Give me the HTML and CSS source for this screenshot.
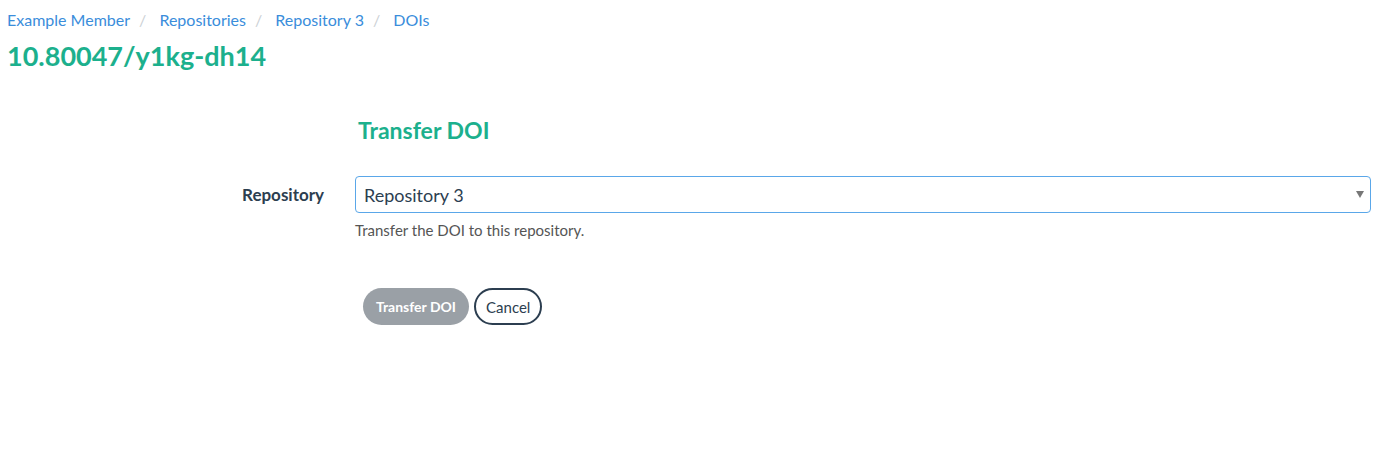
FILE: index.html
```html
<!DOCTYPE html>
<html lang="en">
<head>
<meta charset="utf-8">
<title>Transfer DOI</title>
<link rel="stylesheet" href="styles.css">
</head>
<body>
<div class="page">
  <nav class="breadcrumb">
    <a href="#">Example Member</a><span class="sep">/</span>
    <a href="#">Repositories</a><span class="sep">/</span>
    <a href="#">Repository 3</a><span class="sep">/</span>
    <a href="#">DOIs</a>
  </nav>
  <h1 class="doi-title">10.80047/y1kg-dh14</h1>

  <form class="form">
    <div class="row">
      <div class="label-col"></div>
      <div class="field-col"><h2 class="form-title">Transfer DOI</h2></div>
    </div>
    <div class="row field-row">
      <div class="label-col"><label class="label">Repository</label></div>
      <div class="field-col">
        <div class="select">
          <span class="select-value">Repository 3</span>
          <span class="caret"></span>
        </div>
        <p class="help">Transfer the DOI to this repository.</p>
      </div>
    </div>
    <div class="row">
      <div class="label-col"></div>
      <div class="field-col buttons">
        <button type="button" class="btn btn-primary">Transfer DOI</button>
        <button type="button" class="btn btn-outline">Cancel</button>
      </div>
    </div>
  </form>
</div>
</body>
</html>
```
FILE: styles.css
```css
html, body {
  margin: 0;
  padding: 0;
  background: #fff;
}
body {
  font-family: "Lato", "Liberation Sans", sans-serif;
  color: #2c3e50;
}
.page {
  padding: 8px 17px 0 7px;
}
.breadcrumb {
  font-size: 16px;
  line-height: 24px;
  color: #b4bcc2;
}
.breadcrumb a {
  color: #3a8ddb;
  text-decoration: none;
}
.breadcrumb .sep {
  padding: 0 9px;
  color: #ccd1d5;
}
.doi-title {
  margin: 8px 0 0 0;
  font-size: 27px;
  line-height: 32px;
  font-weight: 700;
  color: #1cb08d;
}
.form {
  margin-top: 42px;
}
.row {
  display: flex;
}
.label-col {
  width: 348px;
  flex: none;
  padding-right: 31px;
  box-sizing: border-box;
  text-align: right;
}
.field-col {
  flex: 1;
}
.form-title {
  margin: 0 0 0 3px;
  font-size: 23px;
  line-height: 32px;
  font-weight: 700;
  color: #1cb08d;
}
.field-row {
  margin-top: 30px;
}
.label {
  display: block;
  font-size: 17px;
  font-weight: 700;
  line-height: 38px;
  color: #2c3e50;
}
.select {
  display: flex;
  align-items: center;
  justify-content: space-between;
  height: 37px;
  box-sizing: border-box;
  border: 1px solid #5aa7e9;
  border-radius: 4px;
  padding: 0 6px 0 8px;
}
.select-value {
  font-size: 18px;
  color: #2c3e50;
}
.caret {
  width: 0;
  height: 0;
  border-left: 4px solid transparent;
  border-right: 4px solid transparent;
  border-top: 7px solid #777;
}
.help {
  margin: 7px 0 0 0;
  font-size: 15px;
  line-height: 20px;
  color: #555;
}
.buttons {
  display: flex;
  gap: 5px;
  margin-top: 48px;
  padding-left: 8px;
}
.btn {
  font-family: inherit;
  height: 37px;
  border-radius: 19px;
  cursor: pointer;
}
.btn-primary {
  background: #9aa0a6;
  border: 0;
  color: #fff;
  font-size: 14px;
  font-weight: 700;
  padding: 0 13px;
}
.btn-outline {
  background: #fff;
  border: 2px solid #2c3e50;
  color: #2c3e50;
  font-size: 15px;
  padding: 0 10px;
}
```
